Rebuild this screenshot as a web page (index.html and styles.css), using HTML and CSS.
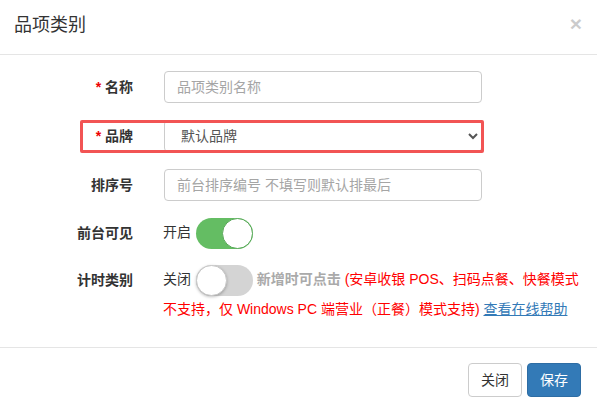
FILE: index.html
```html
<!DOCTYPE html>
<html lang="zh-CN">
<head>
<meta charset="utf-8">
<title>品项类别</title>
<link rel="stylesheet" href="styles.css">
</head>
<body>
<div class="modal">
  <div class="modal-header">
    <h4 class="modal-title">品项类别</h4>
    <button class="close" type="button">×</button>
  </div>
  <div class="modal-body">
    <div class="row">
      <label class="label"><span class="req">*</span> 名称</label>
      <div class="control"><input class="input" type="text" placeholder="品项类别名称"></div>
    </div>
    <div class="row row-highlight">
      <label class="label"><span class="req">*</span> 品牌</label>
      <div class="control"><select class="input select"><option>默认品牌</option></select></div>
    </div>
    <div class="row">
      <label class="label">排序号</label>
      <div class="control"><input class="input" type="text" placeholder="前台排序编号 不填写则默认排最后"></div>
    </div>
    <div class="row row-switch">
      <label class="label">前台可见</label>
      <div class="control wide"><span class="state">开启</span> <span class="switch on"><span class="knob"></span></span></div>
    </div>
    <div class="row row-switch last">
      <label class="label">计时类别</label>
      <div class="control wide"><span class="state">关闭</span> <span class="switch off"><span class="knob"></span></span> <span class="hint">新增时可点击</span> <span class="warn">(安卓收银 POS、扫码点餐、快餐模式</span><span class="warn">不支持，仅 Windows PC 端营业（正餐）模式支持)</span> <a class="help" href="#">查看在线帮助</a></div>
    </div>
  </div>
  <div class="modal-footer">
    <button class="btn btn-default" type="button">关闭</button>
    <button class="btn btn-primary" type="button">保存</button>
  </div>
</div>
</body>
</html>
```

FILE: styles.css
```css
html, body {
  margin: 0;
  padding: 0;
  background: #fff;
}
body {
  font-family: "Liberation Sans", "Noto Sans CJK SC", sans-serif;
  font-size: 14px;
  line-height: 20px;
  color: #333;
}
.modal {
  width: 597px;
}
.modal-header {
  display: flex;
  align-items: center;
  justify-content: space-between;
  height: 55px;
  box-sizing: border-box;
  padding: 0 15px 0 14px;
  border-bottom: 1px solid #e5e5e5;
}
.modal-title {
  margin: 0;
  font-size: 18px;
  font-weight: normal;
  line-height: 26px;
  color: #333;
  padding-bottom: 4px;
}
.close {
  border: 0;
  background: transparent;
  padding: 0;
  font-family: "Liberation Sans", sans-serif;
  font-size: 21px;
  font-weight: bold;
  line-height: 1;
  color: #000;
  opacity: 0.2;
  margin-top: -8px;
  margin-right: 0;
}
.modal-body {
  padding: 16px 0 24px;
}
.row {
  display: flex;
  align-items: center;
  margin-bottom: 17px;
  position: relative;
}
.row.last {
  margin-bottom: 0;
  align-items: flex-start;
}
.label {
  width: 133px;
  flex: none;
  text-align: right;
  font-weight: bold;
  color: #333;
}
.req {
  color: #e00;
}
.control {
  margin-left: 31px;
  width: 318px;
}
.control.wide {
  margin-left: 30px;
  width: 420px;
}
.input {
  display: block;
  box-sizing: border-box;
  width: 318px;
  height: 32px;
  padding: 6px 12px;
  border: 1px solid #ccc;
  border-radius: 4px;
  font-family: inherit;
  font-size: 14px;
  color: #555;
  background: #fff;
  outline: none;
}
.input::placeholder {
  color: #a5a5a5;
}
.select {
  padding-left: 12px;
}
.row-highlight::after {
  content: "";
  position: absolute;
  left: 80px;
  top: 0;
  width: 404px;
  height: 33px;
  box-sizing: border-box;
  border: 3px solid #f25454;
  border-radius: 2px;
  pointer-events: none;
}
.row-switch {
  margin-bottom: 16px;
}
.row-switch .label {
  line-height: 31px;
}
.switch {
  display: inline-block;
  position: relative;
  width: 57px;
  height: 31px;
  border-radius: 16px;
  vertical-align: middle;
  box-sizing: border-box;
  margin: 0 0 0 1px;
}
.switch.on {
  background: #64bd63;
}
.switch.off {
  background: #d4d4d4;
}
.knob {
  position: absolute;
  top: 0;
  width: 31px;
  height: 31px;
  border-radius: 50%;
  background: #fff;
  box-sizing: border-box;
}
.switch.on .knob {
  right: 0;
  border: 1px solid #5aa95a;
}
.switch.off .knob {
  left: 0;
  border: 1px solid #c8c8c8;
  box-shadow: 0 1px 3px rgba(0, 0, 0, 0.25);
}
.row.last .control {
  line-height: 27px;
  margin-top: 0;
}
.hint {
  font-weight: bold;
  color: #aaa;
}
.warn {
  color: #f00;
}
.help {
  color: #337ab7;
  text-decoration: underline;
}
.modal-footer {
  border-top: 1px solid #e5e5e5;
  padding: 15px 16px 15px;
  display: flex;
  justify-content: flex-end;
  gap: 5px;
}
.btn {
  height: 34px;
  padding: 6px 12px;
  font-family: inherit;
  font-size: 14px;
  line-height: 20px;
  border-radius: 4px;
  border: 1px solid #ccc;
  box-sizing: border-box;
}
.btn-default {
  background: #fff;
  color: #333;
}
.btn-primary {
  background: #337ab7;
  border-color: #2e6da4;
  color: #fff;
}
```
